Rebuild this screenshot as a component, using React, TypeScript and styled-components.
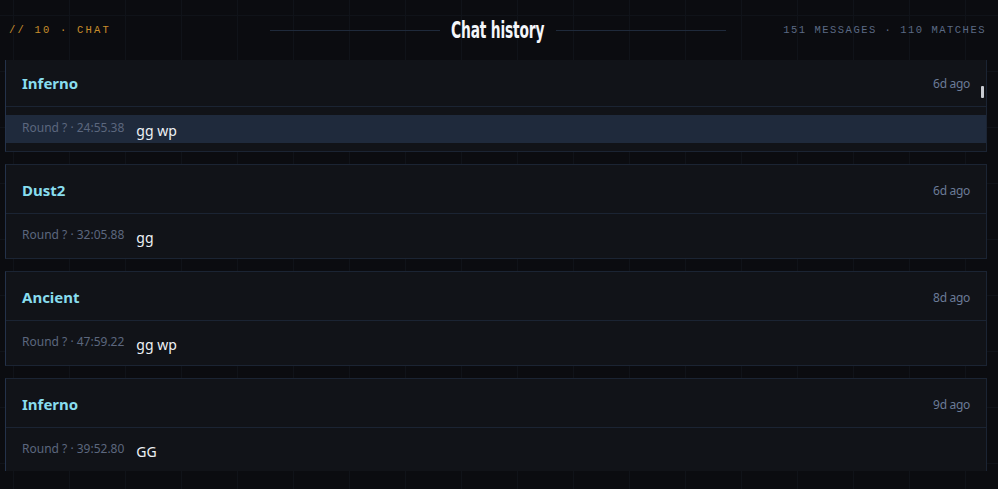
import React from 'react';
import styled, { createGlobalStyle } from 'styled-components';

type Message = {
  id: number;
  map: string;
  ago: string;
  time: string;
  text: string;
  active?: boolean;
};

const messages: Message[] = [
  { id: 1, map: 'Inferno', ago: '6d ago', time: '24:55.38', text: 'gg wp', active: true },
  { id: 2, map: 'Dust2', ago: '6d ago', time: '32:05.88', text: 'gg' },
  { id: 3, map: 'Ancient', ago: '8d ago', time: '47:59.22', text: 'gg wp' },
  { id: 4, map: 'Inferno', ago: '9d ago', time: '39:52.80', text: 'GG' },
];

const GlobalStyle = createGlobalStyle`
  html, body {
    margin: 0;
    padding: 0;
    background: #0b0c10;
  }
  * { box-sizing: border-box; }
`;

const Screen = styled.div`
  height: 489px;
  display: flex;
  flex-direction: column;
  background-color: #0b0c10;
  background-image:
    linear-gradient(to right, #101319 1px, transparent 1px),
    linear-gradient(to bottom, #101319 1px, transparent 1px);
  background-size: 56px 56px;
  background-position: 13px 15px;
  font-family: "Noto Sans", "Open Sans", sans-serif;
  overflow: hidden;
`;

const Header = styled.header`
  height: 60px;
  flex: none;
  display: grid;
  grid-template-columns: 1fr auto 1fr;
  align-items: center;
  padding: 0 12px 0 9px;
`;

const Kicker = styled.div`
  font-family: "Liberation Mono", "DejaVu Sans Mono", monospace;
  font-size: 10.5px;
  letter-spacing: 2.2px;
  color: #c98e2c;
  text-transform: uppercase;
`;

const Stats = styled.div`
  justify-self: end;
  font-family: "Liberation Mono", "DejaVu Sans Mono", monospace;
  font-size: 10.5px;
  letter-spacing: 1.5px;
  color: #5b6a84;
  text-transform: uppercase;
  white-space: nowrap;
`;

const TitleWrap = styled.div`
  display: flex;
  align-items: center;
  gap: 13px;
`;

const Rule = styled.span`
  width: 170px;
  height: 1px;
  background: #1f2a3b;
`;

const Title = styled.h1`
  margin: 0;
  width: 90px;
  display: flex;
  justify-content: center;
  font-family: "DejaVu Sans", sans-serif;
  font-weight: 700;
  font-size: 23px;
  line-height: 1;
  color: #f4f6fa;
  white-space: nowrap;
`;

// no condensed face installed, so the display title is narrowed by hand
const TitleText = styled.span`
  display: inline-block;
  transform: scaleX(0.6);
  letter-spacing: -0.3px;
`;

const ListArea = styled.div`
  position: relative;
  height: 411px;
  flex: none;
  overflow: hidden;
  padding: 0 11px 0 5px;
`;

const List = styled.div`
  display: flex;
  flex-direction: column;
  gap: 12px;
  margin-top: -3px;
`;

const Thumb = styled.div`
  position: absolute;
  top: 26px;
  right: 14px;
  width: 3px;
  height: 12px;
  background: #c9ccd2;
  border-radius: 1px;
`;

const Card = styled.article`
  background: #111318;
  border: 1px solid #1b2433;
  border-left-color: #24324a;
`;

const CardHead = styled.div`
  height: 49px;
  display: flex;
  align-items: center;
  justify-content: space-between;
  padding: 2px 16px 0;
  border-bottom: 1px solid #1b2433;
`;

const MapName = styled.span`
  font-size: 15px;
  font-weight: 700;
  color: #88ddee;
`;

const Ago = styled.span`
  font-size: 12px;
  letter-spacing: -0.3px;
  color: #6b7b97;
`;

const CardBody = styled.div`
  padding: 8px 0;
`;

const Row = styled.div<{ $active?: boolean }>`
  height: 28px;
  display: flex;
  align-items: center;
  gap: 12px;
  padding: 0 16px;
  background: ${(p) => (p.$active ? '#1f2a3c' : 'transparent')};
`;

const Meta = styled.span`
  font-size: 12px;
  color: #5c677e;
  margin-top: -3px;
`;

const Text = styled.span`
  font-size: 14px;
  color: #eef1f5;
  margin-top: 2px;
`;

const App: React.FC = () => {
  return (
    <>
      <GlobalStyle />
      <Screen>
        <Header>
          <Kicker>// 10 · Chat</Kicker>
          <TitleWrap>
            <Rule />
            <Title>
              <TitleText>Chat history</TitleText>
            </Title>
            <Rule />
          </TitleWrap>
          <Stats>151 messages · 110 matches</Stats>
        </Header>
        <ListArea>
          <List>
            {messages.map((m) => (
              <Card key={m.id}>
                <CardHead>
                  <MapName>{m.map}</MapName>
                  <Ago>{m.ago}</Ago>
                </CardHead>
                <CardBody>
                  <Row $active={m.active}>
                    <Meta>Round ? · {m.time}</Meta>
                    <Text>{m.text}</Text>
                  </Row>
                </CardBody>
              </Card>
            ))}
          </List>
          <Thumb />
        </ListArea>
      </Screen>
    </>
  );
};

export default App;
